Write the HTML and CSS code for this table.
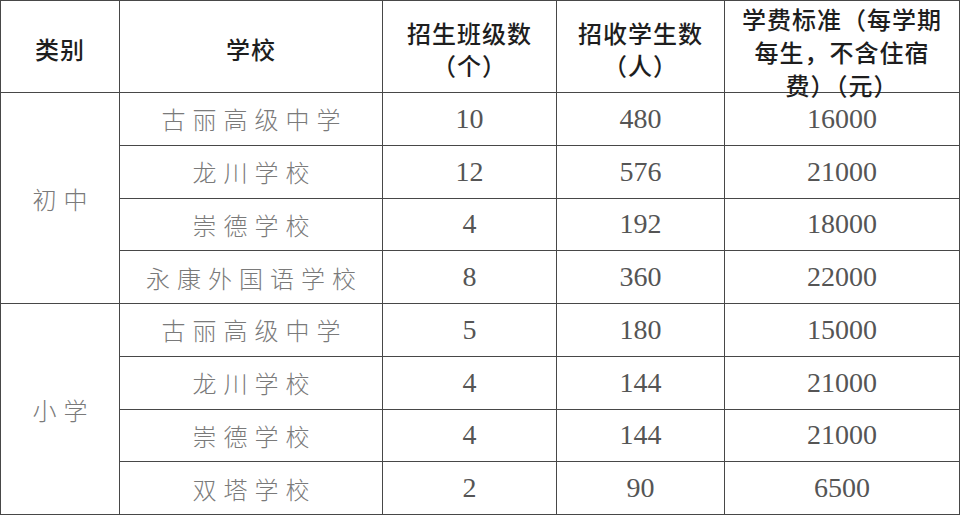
FILE: index.html
```html
<!DOCTYPE html>
<html lang="zh-CN">
<head>
<meta charset="utf-8">
<title>招生计划</title>
<link rel="stylesheet" href="styles.css">
</head>
<body>
<table class="plan">
  <colgroup>
    <col class="c-type">
    <col class="c-school">
    <col class="c-class">
    <col class="c-stu">
    <col class="c-fee">
  </colgroup>
  <thead>
    <tr>
      <th><span class="ln">类别</span></th>
      <th><span class="ln">学校</span></th>
      <th><span class="ln">招生班级数</span><span class="ln">（个）</span></th>
      <th><span class="ln">招收学生数</span><span class="ln">（人）</span></th>
      <th class="fee-head"><div class="fee-wrap"><span class="ln">学费标准（每学期</span><span class="ln">每生，不含住宿</span><span class="ln">费）（元）</span></div></th>
    </tr>
  </thead>
  <tbody>
    <tr>
      <td class="type" rowspan="4">初中</td>
      <td class="name">古丽高级中学</td>
      <td class="num">10</td>
      <td class="num">480</td>
      <td class="num">16000</td>
    </tr>
    <tr>
      <td class="name">龙川学校</td>
      <td class="num">12</td>
      <td class="num">576</td>
      <td class="num">21000</td>
    </tr>
    <tr>
      <td class="name">崇德学校</td>
      <td class="num">4</td>
      <td class="num">192</td>
      <td class="num">18000</td>
    </tr>
    <tr>
      <td class="name">永康外国语学校</td>
      <td class="num">8</td>
      <td class="num">360</td>
      <td class="num">22000</td>
    </tr>
    <tr>
      <td class="type" rowspan="4">小学</td>
      <td class="name">古丽高级中学</td>
      <td class="num">5</td>
      <td class="num">180</td>
      <td class="num">15000</td>
    </tr>
    <tr>
      <td class="name">龙川学校</td>
      <td class="num">4</td>
      <td class="num">144</td>
      <td class="num">21000</td>
    </tr>
    <tr>
      <td class="name">崇德学校</td>
      <td class="num">4</td>
      <td class="num">144</td>
      <td class="num">21000</td>
    </tr>
    <tr>
      <td class="name">双塔学校</td>
      <td class="num">2</td>
      <td class="num">90</td>
      <td class="num">6500</td>
    </tr>
  </tbody>
</table>
</body>
</html>
```

FILE: styles.css
```css
html, body {
  margin: 0;
  padding: 0;
  background: #ffffff;
}

.plan {
  border-collapse: collapse;
  table-layout: fixed;
  width: 959px;
}

.c-type { width: 119px; }
.c-school { width: 263px; }
.c-class { width: 174px; }
.c-stu { width: 168px; }
.c-fee { width: 235px; }

.plan th,
.plan td {
  border: 1px solid #474747;
  padding: 0;
  text-align: center;
  vertical-align: middle;
}

.plan th {
  height: 90px;
  font-family: "Noto Sans CJK SC", "Noto Sans", sans-serif;
  font-weight: 500;
  font-size: 24px;
  letter-spacing: 1px;
  color: #1e1e1e;
  padding-top: 4px;
  box-sizing: border-box;
}

.ln {
  display: block;
  height: 32px;
  line-height: 32px;
  white-space: nowrap;
}

.plan th.fee-head {
  vertical-align: top;
  padding-top: 0;
}

.fee-wrap {
  height: 90px;
  margin-top: 1px;
  overflow: visible;
}

.fee-wrap .ln {
  height: 33px;
  line-height: 33px;
}

.plan td {
  height: 51.75px;
}

.type,
.name {
  font-family: "Noto Sans CJK SC", "Noto Sans", sans-serif;
  font-weight: 300;
  font-size: 24px;
  color: #7a7a7a;
  letter-spacing: 7px;
  text-indent: 7px;
}

.num {
  font-family: "Liberation Serif", "Times New Roman", serif;
  font-size: 28px;
  color: #555555;
  padding-top: 2px;
}
```
